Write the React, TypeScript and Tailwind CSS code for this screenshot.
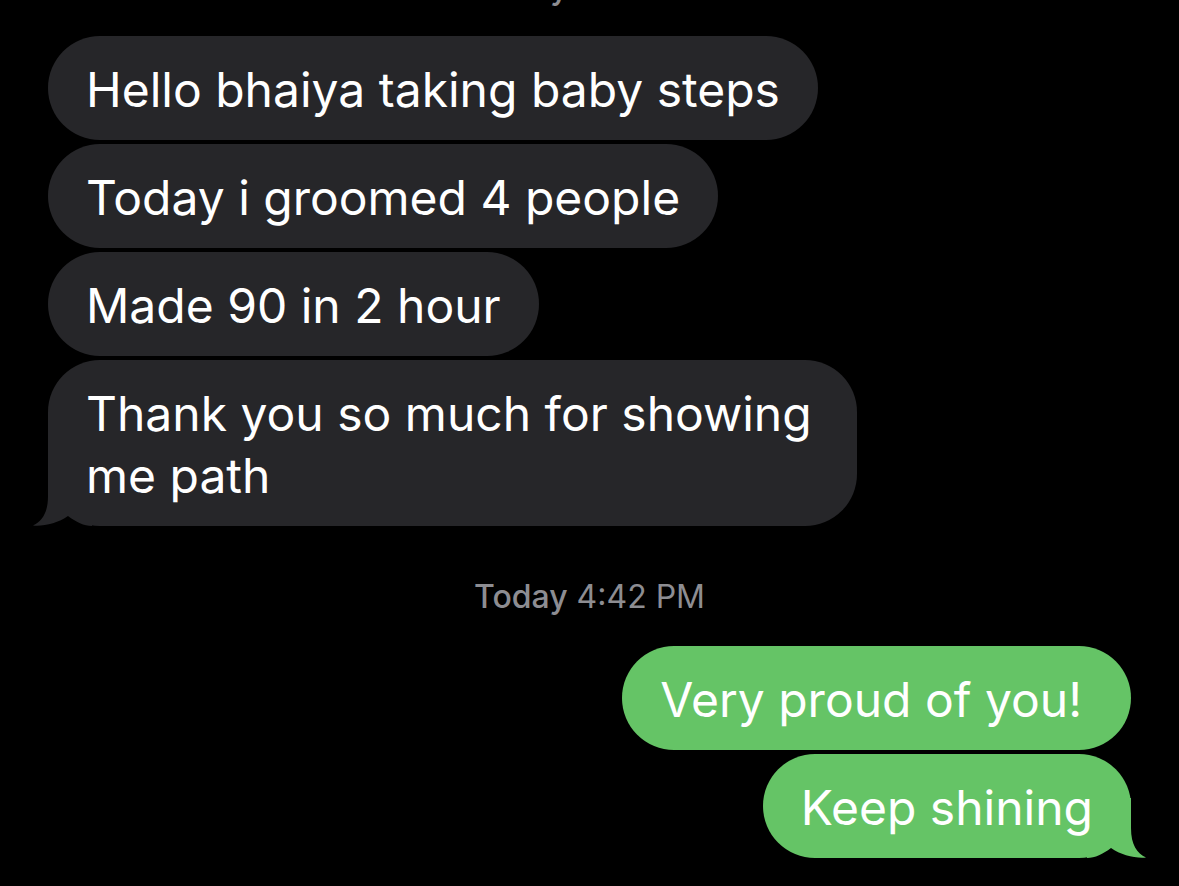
import React from "react";

interface Message {
    id: number;
    text: string;
    fromMe: boolean;
    tail?: boolean;
    extra?: string;
}

const earlier: Message[] = [
    { id: 1, text: "Hello bhaiya taking baby steps", fromMe: false },
    { id: 2, text: "Today i groomed 4 people", fromMe: false },
    { id: 3, text: "Made 90 in 2 hour", fromMe: false },
    { id: 4, text: "Thank you so much for showing me path", fromMe: false, tail: true, extra: "w-[809px]" },
];

const recent: Message[] = [
    { id: 5, text: "Very proud of you!", fromMe: true, extra: "w-fit pr-[49px]" },
    { id: 6, text: "Keep shining", fromMe: true, tail: true },
];

// bubble tail, drawn for the left side; flipped for outgoing
const Tail = ({ color, flip }: { color: string; flip?: boolean }) => (
    <svg
        width="60"
        height="60"
        viewBox="0 0 60 60"
        className={flip ? "absolute -right-[16px] bottom-0 -scale-x-100" : "absolute -left-[16px] bottom-0"}
    >
        <path
            d="M16 0 L16 30 C16 47 10 55 1 59.5 C12 60.5 26 57 36 50 C44 56 52 60 60 60 L60 0 Z"
            fill={color}
        />
    </svg>
);

const Bubble = ({ msg }: { msg: Message }) => {
    const bg = msg.fromMe ? "#65c466" : "#262629";
    return (
        <div
            className={[
                "relative rounded-[52px] px-[38px] pt-[23px] pb-[19px] text-[48px] leading-[62px] text-white",
                msg.fromMe ? "self-end bg-[#65c466]" : "self-start bg-[#262629]",
                msg.extra ?? "w-fit",
            ].join(" ")}
        >
            {msg.tail && <Tail color={bg} flip={msg.fromMe} />}
            <span className="relative">{msg.text}</span>
        </div>
    );
};

const Stamp = ({ day, time, className }: { day: string; time: string; className?: string }) => (
    <div className={"text-center text-[32px] leading-[38px] text-[#8d8d92] " + (className ?? "")}>
        <span className="font-medium">{day}</span> {time}
    </div>
);

export default function App() {
    return (
        <div
            className="w-full h-[886px] bg-black overflow-hidden flex flex-col px-12"
            style={{ fontFamily: "Inter, 'Noto Sans', sans-serif" }}
        >
            <Stamp day="Today" time="3:58 PM" className="-mt-[31px]" />

            <div className="flex flex-col gap-1 mt-[29px]">
                {earlier.map(m => <Bubble key={m.id} msg={m} />)}
            </div>

            <Stamp day="Today" time="4:42 PM" className="mt-[52px]" />

            <div className="flex flex-col gap-1 mt-[30px]">
                {recent.map(m => <Bubble key={m.id} msg={m} />)}
            </div>
        </div>
    );
}
